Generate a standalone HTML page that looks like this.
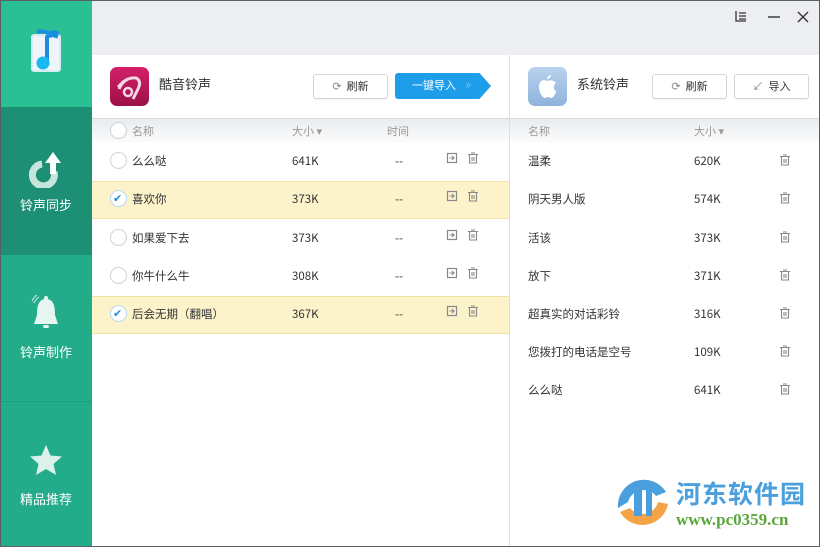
<!DOCTYPE html>
<html><head><meta charset="utf-8"><style>
*{margin:0;padding:0;box-sizing:border-box}
body{width:820px;height:547px;overflow:hidden;font-family:"Noto Sans CJK SC","Liberation Sans",sans-serif;font-size:12px;color:#333;background:#fff;position:relative}
.abs{position:absolute}
.frame{position:absolute;left:0;top:0;width:820px;height:547px;border:1px solid #5a5f63;pointer-events:none;z-index:10}
.side{left:0;top:0;width:92px;height:547px;background:#22ac8a}
.top{left:92px;top:0;width:728px;height:55px;background:#eceef1}
.ph{top:55px;height:63px;background:#fff}
.colh{top:118px;height:24px;background:linear-gradient(#e9ecef,#fafbfc);border-top:1px solid #d8dbde}
.row{height:38px;left:92px;width:417px}
.sel{background:#fdf3cb;border-top:1px solid #f1e3a8;border-bottom:1px solid #f1e3a8}
.t{position:absolute;font-size:11.5px;line-height:16px;color:#333;white-space:nowrap}
.g{color:#999;font-size:11px}
.cb{position:absolute;width:17px;height:17px;border:1px solid #cfd2d5;border-radius:50%;background:#fff}
.btn{position:absolute;height:25px;border:1px solid #d3d6d9;border-radius:3px;background:#fff;font-size:11px;color:#333;line-height:23px;text-align:center;box-shadow:0 1px 1px rgba(0,0,0,.05)}
.lbl{position:absolute;width:92px;text-align:center;color:#fff;font-size:13px;line-height:18px}
</style></head><body>
<div class="abs side"></div>
<div class="abs" style="left:0;top:0;width:92px;height:107px;background:#2bbf94"></div>
<div class="abs" style="left:0;top:107px;width:92px;height:148px;background:#1c8f75"></div>
<div class="abs" style="left:0;top:401px;width:92px;height:1px;background:#1f9d7f"></div>
<div class="abs" style="left:31px;top:34px;width:30px;height:38px;background:#eef6fb;border-radius:3px;border:2px solid #d7ebf5"></div>
<svg class="abs" style="left:29px;top:28px" width="34" height="46" viewBox="0 0 34 46"><path d="M8 4 Q16 2 20 6 Q24 3 28 5 L27 8 Q22 6 18 9 L18 36" stroke="#1a8fe0" stroke-width="4" fill="none"/><circle cx="14" cy="35" r="6.5" fill="#18b8f0"/></svg>
<svg class="abs" style="left:28px;top:150px" width="36" height="38" viewBox="0 0 36 38"><path d="M14 14 A11 11 0 1 0 26 22" stroke="#d9efe8" stroke-width="7" fill="none" opacity=".9"/><path d="M25 24 L25 12" stroke="#fff" stroke-width="6"/><path d="M17 13 L25 2 L33 13Z" fill="#fff"/></svg>
<div class="lbl" style="top:196px">铃声同步</div>
<svg class="abs" style="left:30px;top:295px" width="32" height="40" viewBox="0 0 32 40"><path d="M16 4 C8 4 7 12 7 20 L4 29 L28 29 L25 20 C25 12 24 4 16 4Z" fill="#e6f5f0"/><rect x="13" y="30" width="6" height="3" rx="1.5" fill="#e6f5f0"/><circle cx="16" cy="3" r="2" fill="#e6f5f0"/><path d="M4 8 Q6 4 9 2 M2 6 Q4 2 7 0" stroke="#d9efe8" stroke-width="1" fill="none"/></svg>
<div class="lbl" style="top:343px">铃声制作</div>
<svg class="abs" style="left:28px;top:443px" width="36" height="36" viewBox="0 0 36 36"><path d="M18 2 L22.5 12.5 L34 13.5 L25.5 21 L28 32 L18 26 L8 32 L10.5 21 L2 13.5 L13.5 12.5Z" fill="#dcf1ea"/></svg>
<div class="lbl" style="top:490px">精品推荐</div>

<div class="abs top"></div>
<svg class="abs" style="left:734px;top:9px" width="80" height="16" viewBox="0 0 80 16"><path d="M2 2 V12 H12 M5 4 H12 M5 7 H12 M5 10 H12" stroke="#333" stroke-width="1.3" fill="none"/><path d="M34 8 H46" stroke="#333" stroke-width="1.4"/><path d="M64 3 L74 13 M74 3 L64 13" stroke="#333" stroke-width="1.4"/></svg>

<div class="abs ph" style="left:92px;width:417px"></div>
<div class="abs" style="left:110px;top:67px;width:39px;height:39px;border-radius:7px;background:linear-gradient(#d4206a,#9c1048)"></div>
<svg class="abs" style="left:110px;top:67px" width="39" height="39" viewBox="0 0 39 39"><path d="M9 22 Q14 10 26 11 Q32 14 28 22 L23 32" stroke="#f3d7e2" stroke-width="3" fill="none"/><circle cx="18" cy="25" r="4" stroke="#f3d7e2" stroke-width="2.5" fill="none"/><path d="M8 20 L14 14" stroke="#f3d7e2" stroke-width="3"/></svg>
<div class="t" style="left:159px;top:75px;font-size:13px;line-height:18px">酷音铃声</div>
<div class="btn" style="left:313px;top:74px;width:75px"><span style="color:#888">⟳</span>&nbsp; 刷新</div>
<div class="abs" style="left:395px;top:73px;width:96px;height:26px;background:#1e9ee8;clip-path:polygon(0 0,88% 0,100% 50%,88% 100%,0 100%);border-radius:3px 0 0 3px"></div>
<div class="t" style="left:412px;top:77px;color:#fff;font-size:11px">一键导入</div>
<div class="t" style="left:465px;top:76px;color:#6fc3f4;font-size:13px">»</div>

<div class="abs" style="left:509px;top:55px;width:1px;height:492px;background:#dcdfe2"></div>
<div class="abs ph" style="left:510px;width:309px"></div>
<div class="abs" style="left:528px;top:67px;width:39px;height:39px;border-radius:7px;background:linear-gradient(#b9d2ee,#8fb3dc)"></div>
<svg class="abs" style="left:528px;top:67px" width="39" height="39" viewBox="0 0 39 39"><path d="M19 14 C16 12 11 13 11 20 C11 26 15 31 17 31 C18 31 19 30 20 30 C21 30 22 31 23 31 C25 31 28 27 28 24 C25 23 25 18 28 16 C26 13 22 13 19 14Z M19 12 C19 10 21 8 23 8 C23 10 21 12 19 12Z" fill="#fff"/></svg>
<div class="t" style="left:577px;top:75px;font-size:13px;line-height:18px">系统铃声</div>
<div class="btn" style="left:652px;top:74px;width:75px"><span style="color:#888">⟳</span>&nbsp; 刷新</div>
<div class="btn" style="left:734px;top:74px;width:75px"><span style="color:#888">↙</span>&nbsp; 导入</div>

<div class="abs colh" style="left:92px;width:417px"></div>
<div class="abs colh" style="left:510px;width:309px"></div>
<div class="cb" style="left:110px;top:122px"></div>
<div class="t g" style="left:132px;top:123px">名称</div>
<div class="t g" style="left:292px;top:123px">大小 ▾</div>
<div class="t g" style="left:387px;top:123px">时间</div>
<div class="t g" style="left:528px;top:123px">名称</div>
<div class="t g" style="left:694px;top:123px">大小 ▾</div>

<div class="abs row sel" style="top:181px"></div>
<div class="abs row sel" style="top:296px"></div>

<div class="cb" style="left:110px;top:152px"></div><div class="t" style="left:132px;top:153px">么么哒</div><div class="t" style="left:292px;top:153px">641K</div><div class="t" style="left:395px;top:153px">--</div>
<div class="cb" style="left:110px;top:190px;border-color:#bcd6ee"></div><div class="t" style="left:113px;top:190px;color:#1b8fe0;font-size:11px">✔</div><div class="t" style="left:132px;top:191px">喜欢你</div><div class="t" style="left:292px;top:191px">373K</div><div class="t" style="left:395px;top:191px">--</div>
<div class="cb" style="left:110px;top:229px"></div><div class="t" style="left:132px;top:230px">如果爱下去</div><div class="t" style="left:292px;top:230px">373K</div><div class="t" style="left:395px;top:230px">--</div>
<div class="cb" style="left:110px;top:267px"></div><div class="t" style="left:132px;top:268px">你牛什么牛</div><div class="t" style="left:292px;top:268px">308K</div><div class="t" style="left:395px;top:268px">--</div>
<div class="cb" style="left:110px;top:305px;border-color:#bcd6ee"></div><div class="t" style="left:113px;top:305px;color:#1b8fe0;font-size:11px">✔</div><div class="t" style="left:132px;top:306px">后会无期（翻唱）</div><div class="t" style="left:292px;top:306px">367K</div><div class="t" style="left:395px;top:306px">--</div>

<svg class="abs" style="left:446px;top:150px" width="36" height="170" viewBox="0 0 36 170">
<defs><g id="ic"><rect x="1.5" y="1.5" width="9" height="9" fill="none" stroke="#888" stroke-width="1.2"/><path d="M3.5 6 H8 M6 4 L8 6 L6 8" stroke="#888" stroke-width="1.1" fill="none"/><path d="M22 2.5 H32 M25 1 H29 M23.5 3 V11 H30.5 V3 M26 5 V9 M28 5 V9" stroke="#888" stroke-width="1.1" fill="none"/></g></defs>
<use href="#ic" y="2"/><use href="#ic" y="40"/><use href="#ic" y="79"/><use href="#ic" y="117"/><use href="#ic" y="155"/>
</svg>

<div class="t" style="left:528px;top:153px">温柔</div><div class="t" style="left:694px;top:153px">620K</div>
<div class="t" style="left:528px;top:191px">阴天男人版</div><div class="t" style="left:694px;top:191px">574K</div>
<div class="t" style="left:528px;top:230px">活该</div><div class="t" style="left:694px;top:230px">373K</div>
<div class="t" style="left:528px;top:268px">放下</div><div class="t" style="left:694px;top:268px">371K</div>
<div class="t" style="left:528px;top:306px">超真实的对话彩铃</div><div class="t" style="left:694px;top:306px">316K</div>
<div class="t" style="left:528px;top:344px">您拨打的电话是空号</div><div class="t" style="left:694px;top:344px">109K</div>
<div class="t" style="left:528px;top:382px">么么哒</div><div class="t" style="left:694px;top:382px">641K</div>
<svg class="abs" style="left:756px;top:150px" width="36" height="250" viewBox="0 0 36 250">
<defs><path id="tr" d="M24 2.5 H34 M27 1 H31 M25.5 3 V11 H32.5 V3 M28 5 V9 M30 5 V9" stroke="#888" stroke-width="1.1" fill="none"/></defs>
<use href="#tr" y="4"/><use href="#tr" y="42"/><use href="#tr" y="81"/><use href="#tr" y="119"/><use href="#tr" y="157"/><use href="#tr" y="195"/><use href="#tr" y="233"/>
</svg>

<svg class="abs" style="left:612px;top:472px" width="60" height="58" viewBox="0 0 60 58"><path d="M6 36 A26 26 0 0 1 54 20 L44 24 A16 16 0 0 0 16 30Z" fill="#4a9fdd"/><path d="M8 40 A26 26 0 0 0 56 32 L46 30 A16 16 0 0 1 18 36Z" fill="#f4a447"/><path d="M22 20 L30 14 L30 44 L22 44Z M34 16 L40 16 L40 44 L34 44Z" fill="#4a9fdd"/></svg>
<div class="t" style="left:676px;top:478px;font-family:'Noto Sans CJK SC',sans-serif;font-weight:bold;font-size:25px;line-height:30px;color:#4a9fdd;letter-spacing:1px">河东软件园</div>
<div class="t" style="left:676px;top:510px;font-family:'Liberation Serif',serif;font-weight:bold;font-size:17px;line-height:20px;color:#5aa63a">www.pc0359.cn</div>
<div class="frame"></div>
</body></html>
